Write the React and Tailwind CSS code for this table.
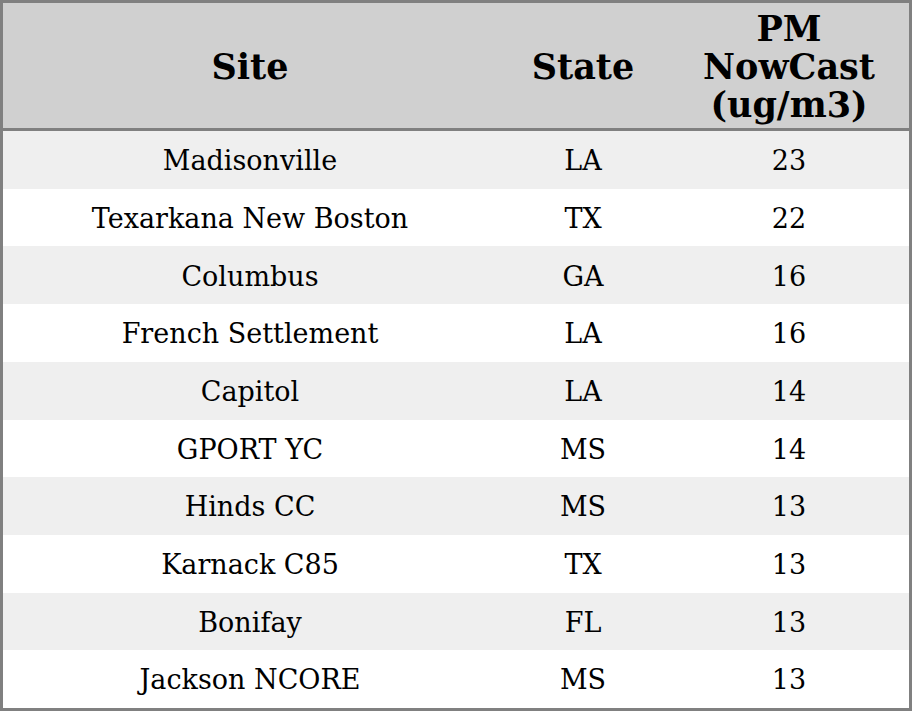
import React from 'react';

const rows = [
    ['Madisonville', 'LA', '23'],
    ['Texarkana New Boston', 'TX', '22'],
    ['Columbus', 'GA', '16'],
    ['French Settlement', 'LA', '16'],
    ['Capitol', 'LA', '14'],
    ['GPORT YC', 'MS', '14'],
    ['Hinds CC', 'MS', '13'],
    ['Karnack C85', 'TX', '13'],
    ['Bonifay', 'FL', '13'],
    ['Jackson NCORE', 'MS', '13'],
];

const App = () => {
    return (
        <div className="w-[912px] h-[711px] bg-white font-['DejaVu_Serif',serif] text-black">
            <div className="w-full h-full border-[3px] border-[#808080] flex flex-col">
                {/* Header */}
                <div className="h-[128px] shrink-0 pt-[2px] bg-[#d0d0d0] border-b-[3px] border-[#808080] flex items-center font-bold text-[35px] leading-[38px] text-center">
                    <div className="w-[494px]">Site</div>
                    <div className="w-[172px]">State</div>
                    <div className="flex-1">PM<br />NowCast<br />(ug/m3)</div>
                </div>

                {/* Rows */}
                <div className="flex-1 flex flex-col">
                    {rows.map((r, i) => (
                        <div
                            key={r[0]}
                            className={`flex-1 pt-[3px] flex items-center text-center text-[27px] ${i % 2 === 0 ? 'bg-[#efefef]' : 'bg-white'}`}
                        >
                            <div className="w-[494px]">{r[0]}</div>
                            <div className="w-[172px]">{r[1]}</div>
                            <div className="flex-1">{r[2]}</div>
                        </div>
                    ))}
                </div>
            </div>
        </div>
    );
};

export default App;
